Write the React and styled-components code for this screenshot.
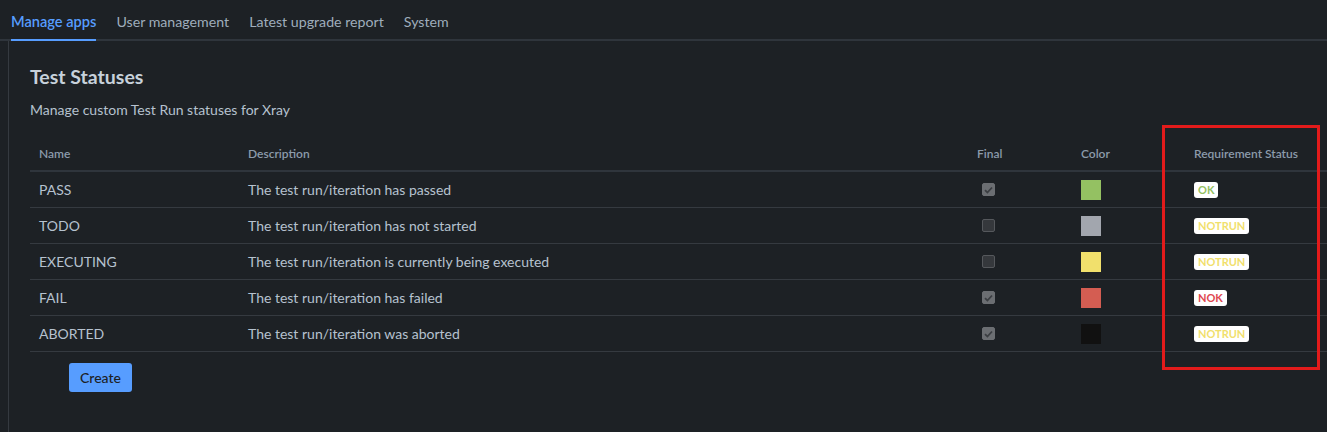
import React from 'react'
import styled, { createGlobalStyle } from 'styled-components'

const GlobalStyle = createGlobalStyle`
    html, body {
        margin: 0;
        padding: 0;
        background-color: #1d2125;
        font-family: 'Lato', 'Noto Sans', sans-serif;
        color: #b6c2cf;
    }
`

const tabs = ['Manage apps', 'User management', 'Latest upgrade report', 'System']

const statuses = [
    { name: 'PASS', description: 'The test run/iteration has passed', final: true, color: '#94c162', req: 'OK', reqColor: '#94c162' },
    { name: 'TODO', description: 'The test run/iteration has not started', final: false, color: '#a2a6ae', req: 'NOTRUN', reqColor: '#f1e06c' },
    { name: 'EXECUTING', description: 'The test run/iteration is currently being executed', final: false, color: '#f1e06c', req: 'NOTRUN', reqColor: '#f1e06c' },
    { name: 'FAIL', description: 'The test run/iteration has failed', final: true, color: '#d45d52', req: 'NOK', reqColor: '#e0474f' },
    { name: 'ABORTED', description: 'The test run/iteration was aborted', final: true, color: '#111111', req: 'NOTRUN', reqColor: '#f1e06c' },
]

const Check = ({ checked }) => (
    <CheckBox checked={checked}>
        {checked && (
            <svg width="9" height="8" viewBox="0 0 9 8">
                <path d="M1 4.2 L3.4 6.5 L8 1.5" fill="none" stroke="#3b3e42" strokeWidth="1.8" />
            </svg>
        )}
    </CheckBox>
)

const App = () => {
    return (
        <Page>
            <GlobalStyle />
            <Tabs>
                {tabs.map((t, i) => (
                    <Tab key={t} active={i === 0}>{t}</Tab>
                ))}
            </Tabs>
            <Panel>
                <Title>Test Statuses</Title>
                <Subtitle>Manage custom Test Run statuses for Xray</Subtitle>
                <Table>
                    <HeaderRow>
                        <Cell>Name</Cell>
                        <Cell>Description</Cell>
                        <Cell>Final</Cell>
                        <Cell>Color</Cell>
                        <Cell>Requirement Status</Cell>
                    </HeaderRow>
                    {statuses.map(s => (
                        <Row key={s.name}>
                            <Cell>{s.name}</Cell>
                            <Cell>{s.description}</Cell>
                            <Cell><Check checked={s.final} /></Cell>
                            <Cell><Swatch color={s.color} /></Cell>
                            <Cell><Lozenge color={s.reqColor}>{s.req}</Lozenge></Cell>
                        </Row>
                    ))}
                </Table>
                <Button>Create</Button>
            </Panel>
            <Highlight />
        </Page>
    )
}

export default App

const Page = styled.div`
    position: relative;
    width: 1327px;
    height: 432px;
    overflow: hidden;
`
const Tabs = styled.div`
    display: flex;
    gap: 20px;
    padding: 0 0 0 11px;
    height: 39px;
    border-bottom: 2px solid #2f353c;
`
const Tab = styled.div`
    display: flex;
    align-items: center;
    box-sizing: border-box;
    padding-top: 4px;
    height: 41px;
    margin-bottom: -2px;
    font-size: ${p => (p.active ? '14.6px' : '14.2px')};
    font-weight: ${p => (p.active ? 600 : 400)};
    color: ${p => (p.active ? '#579dff' : '#9fadbc')};
    border-bottom: 2px solid ${p => (p.active ? '#579dff' : 'transparent')};
`
const Panel = styled.div`
    margin-left: 8px;
    border-left: 1px solid #353a40;
    padding: 24px 0 40px 21px;
    height: 400px;
    box-sizing: border-box;
`
const Title = styled.h2`
    margin: 0;
    font-size: 19.5px;
    font-weight: 700;
    color: #c7d1db;
    line-height: 24px;
`
const Subtitle = styled.p`
    margin: 11px 0 0 0;
    font-size: 14px;
    line-height: 20px;
    color: #b6c2cf;
`
const Table = styled.div`
    margin-top: 16px;
`
const HeaderRow = styled.div`
    display: grid;
    grid-template-columns: 209px 729px 104px 113px 1fr;
    height: 34px;
    align-items: center;
    border-bottom: 2px solid #2f353c;
    font-size: 12px;
    font-weight: 600;
    color: #8c9bab;
`
const Row = styled.div`
    display: grid;
    grid-template-columns: 209px 729px 104px 113px 1fr;
    height: 35px;
    align-items: center;
    border-bottom: 1px solid #353a40;
    font-size: 14px;
    color: #b6c2cf;
`
const Cell = styled.div`
    display: flex;
    align-items: center;
    padding-left: 9px;
    white-space: nowrap;
`
const CheckBox = styled.span`
    display: inline-flex;
    align-items: center;
    justify-content: center;
    width: 13px;
    height: 13px;
    box-sizing: border-box;
    margin-left: 5px;
    border-radius: 2px;
    background-color: ${p => (p.checked ? '#6b6e72' : '#35383c')};
    border: 1px solid ${p => (p.checked ? '#6b6e72' : '#55585c')};
`
const Swatch = styled.span`
    display: block;
    width: 20px;
    height: 20px;
    background-color: ${p => p.color};
`
const Lozenge = styled.span`
    display: inline-block;
    background-color: #ffffff;
    border-radius: 3px;
    padding: 0 4px;
    height: 16px;
    line-height: 16px;
    font-size: 11px;
    font-weight: 700;
    color: ${p => p.color};
`
const Button = styled.button`
    margin: 11px 0 0 39px;
    height: 29px;
    padding: 0 11px;
    border: none;
    border-radius: 3px;
    background-color: #579dff;
    color: #1d2125;
    font-family: inherit;
    font-size: 14px;
    font-weight: 500;
`
const Highlight = styled.div`
    position: absolute;
    left: 1162px;
    top: 125px;
    width: 158px;
    height: 245px;
    box-sizing: border-box;
    border: 3px solid #e21b1b;
    pointer-events: none;
`
